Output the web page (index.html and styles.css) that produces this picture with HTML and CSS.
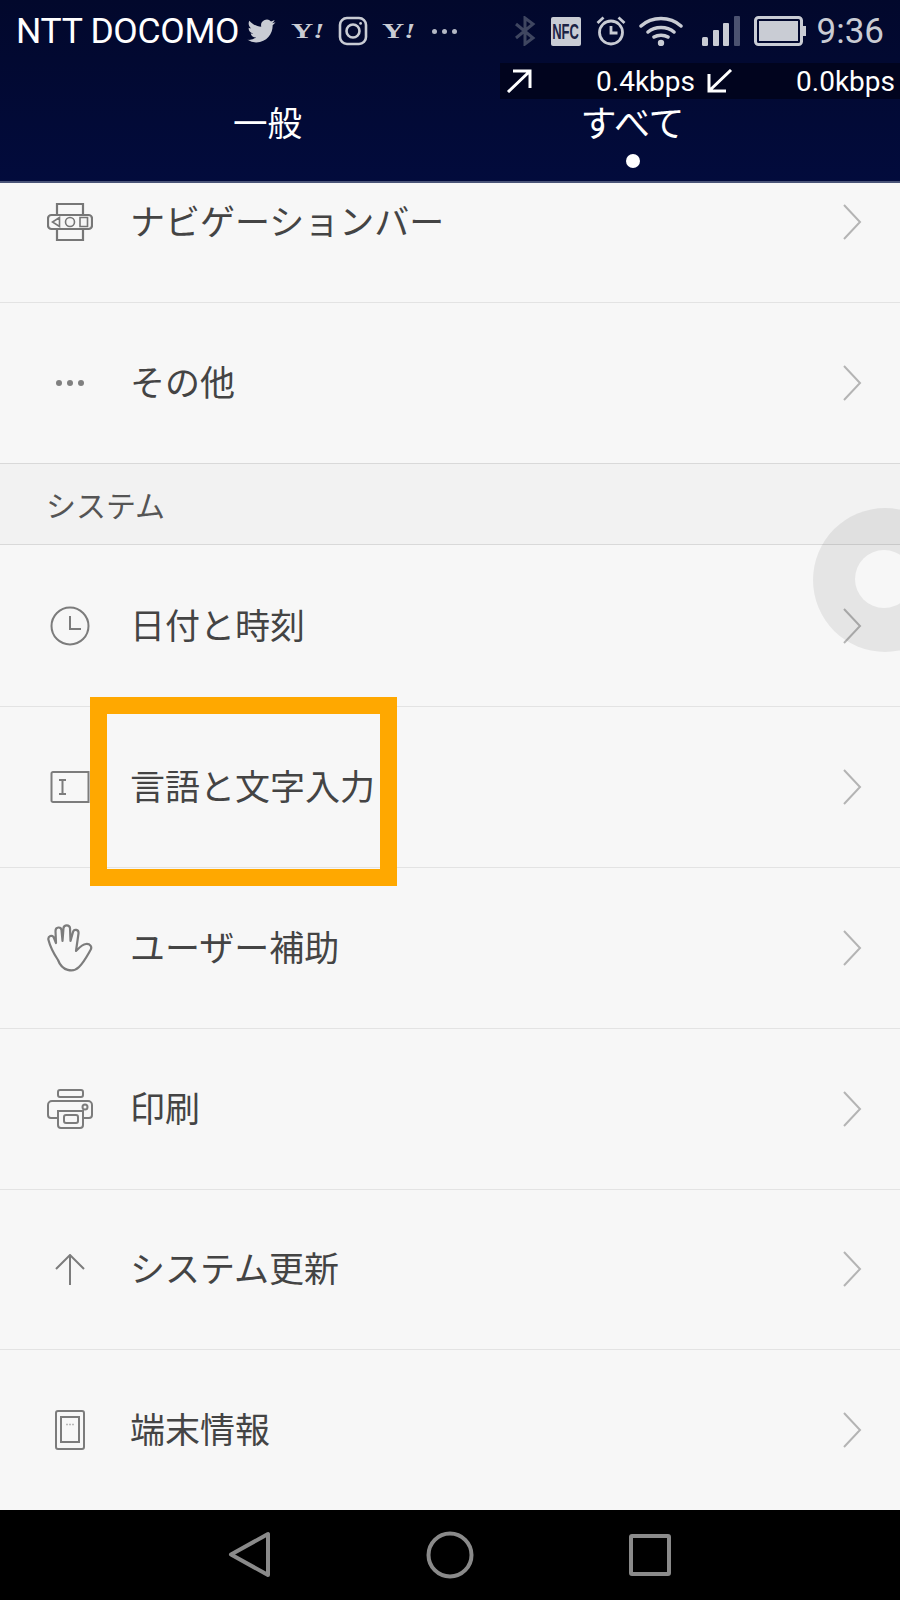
FILE: index.html
```html
<!DOCTYPE html>
<html>
<head>
  <title>設定</title>
  <link rel="stylesheet" href="styles.css">
</head>
<body>
  <div class="phone">
    <div class="header">
      <div class="status-bar">
        <div class="status-left">
          <span class="carrier">NTT DOCOMO</span>
          <svg class="ic-twitter" viewBox="0 0 24 24"><path fill="#c9ccd4" d="M23.953 4.57a10 10 0 01-2.825.775 4.958 4.958 0 002.163-2.723c-.951.555-2.005.959-3.127 1.184a4.92 4.92 0 00-8.384 4.482C7.69 8.095 4.067 6.13 1.64 3.162a4.822 4.822 0 00-.666 2.475c0 1.71.87 3.213 2.188 4.096a4.904 4.904 0 01-2.228-.616v.06a4.923 4.923 0 003.946 4.827 4.996 4.996 0 01-2.212.085 4.936 4.936 0 004.604 3.417 9.867 9.867 0 01-6.102 2.105c-.39 0-.779-.023-1.17-.067a13.995 13.995 0 007.557 2.209c9.053 0 13.998-7.496 13.998-13.985 0-.21 0-.42-.015-.63A9.935 9.935 0 0024 4.59z"/></svg>
          <span class="yahoo">Y<i>!</i></span>
          <svg class="ic-insta" viewBox="0 0 30 30" fill="none" stroke="#c9ccd4" stroke-width="2.6"><rect x="2" y="2" width="26" height="26" rx="7"/><circle cx="15" cy="15" r="6.5"/><circle cx="22.6" cy="7.4" r="1.4" fill="#c9ccd4" stroke="none"/></svg>
          <span class="yahoo">Y<i>!</i></span>
          <span class="more-dots"><b></b><b></b><b></b></span>
        </div>
        <div class="status-right">
          <svg class="ic-bt" viewBox="0 0 22 30" fill="none" stroke="#3f4660" stroke-width="3"><path d="M2 8l17 14-8 6V2l8 6L2 22"/></svg>
          <span class="ic-nfc"><span class="nfc-text">NFC</span></span>
          <svg class="ic-alarm" viewBox="0 0 30 30" fill="none" stroke="#c9ccd4" stroke-width="2.8"><circle cx="15" cy="16.500" r="11.500"/><path d="M15 10v7h6.500M1.500 7l6-5.500M28.500 7l-6-5.500"/></svg>
          <svg class="ic-wifi" viewBox="0 0 44 30" fill="none" stroke="#c9ccd4" stroke-width="3.500" stroke-linecap="round"><path d="M2 10c11-10 29-10 40 0M9 16c7-6 19-6 26 0M15 21c4-2.500 10-2.500 14 0"/><circle cx="22" cy="27" r="3.200" fill="#c9ccd4" stroke="none"/></svg>
          <svg class="ic-signal" viewBox="0 0 38 30"><rect x="0" y="21" width="6" height="9" rx="1.500" fill="#c9ccd4"/><rect x="11" y="14" width="6" height="16" rx="1" fill="#c9ccd4"/><rect x="21" y="7" width="6" height="23" rx="1" fill="#c9ccd4"/><rect x="32" y="0" width="6" height="30" rx="1" fill="#4b5270"/></svg>
          <svg class="ic-battery" viewBox="0 0 52 30"><rect x="1.500" y="1.500" width="46" height="27" rx="3" fill="none" stroke="#c9ccd4" stroke-width="3"/><rect x="5" y="5" width="39" height="20" fill="#c9ccd4"/><rect x="49" y="10" width="3" height="10" fill="#c9ccd4"/></svg>
          <span class="clock">9:36</span>
        </div>
      </div>

      <div class="net-speed">
        <svg class="ic-net" viewBox="0 0 26 24" fill="none" stroke="#fff" stroke-width="3"><path d="M2 23L24 2M7 2h17v17"/></svg>
        <span class="net-val up">0.4kbps</span>
        <svg class="ic-net" viewBox="0 0 26 24" fill="none" stroke="#fff" stroke-width="3"><path d="M24 1L2 22M19 22H2V5"/></svg>
        <span class="net-val down">0.0kbps</span>
      </div>

      <div class="tabs">
        <div class="tab">一般</div>
        <div class="tab active">すべて<span class="tab-dot"></span></div>
      </div>
    </div>

    <div class="list">
      <div class="row row-cut">
        <div class="row-icon">
          <svg width="46" height="40" viewBox="0 0 46 40" fill="none" stroke="#777" stroke-width="2.200"><path d="M10 13V2h26v11M10 27v11h26V27"/><rect x="1" y="13" width="44" height="14" rx="3.500"/><path d="M12.500 15.500l-7 4.500 7 4.500zM33 15.500h7.500v9H33z" stroke-width="1.600"/><circle cx="23" cy="20" r="4.500" stroke-width="1.600"/></svg>
        </div>
        <span class="row-text">ナビゲーションバー</span>
        <svg class="chevron" viewBox="0 0 20 36"><path d="M2 1l16 17L2 35"/></svg>
      </div>
      <div class="row">
        <div class="row-icon">
          <svg width="46" height="10" viewBox="0 0 46 10" fill="#808080"><circle cx="12" cy="5" r="3"/><circle cx="23" cy="5" r="3"/><circle cx="34" cy="5" r="3"/></svg>
        </div>
        <span class="row-text">その他</span>
        <svg class="chevron" viewBox="0 0 20 36"><path d="M2 1l16 17L2 35"/></svg>
      </div>

      <div class="section">システム</div>

      <div class="row">
        <div class="row-icon">
          <svg width="40" height="40" viewBox="0 0 40 40" fill="none" stroke="#7c7c7c" stroke-width="2"><circle cx="20" cy="20" r="18.500"/><path d="M20 10v13h11"/></svg>
        </div>
        <span class="row-text">日付と時刻</span>
        <svg class="chevron" viewBox="0 0 20 36"><path d="M2 1l16 17L2 35"/></svg>
      </div>
      <div class="row">
        <div class="row-icon">
          <svg width="40" height="32" viewBox="0 0 40 32" fill="none" stroke="#7c7c7c" stroke-width="2"><path d="M38 1H3a1.500 1.500 0 00-1.500 1.500v27A1.500 1.500 0 003 31h35.500V1z"/><path d="M9 9h7M9 23h7M12.500 9v14"/></svg>
        </div>
        <span class="row-text">言語と文字入力</span>
        <svg class="chevron" viewBox="0 0 20 36"><path d="M2 1l16 17L2 35"/></svg>
      </div>
      <div class="row">
        <div class="row-icon">
          <svg width="46" height="48" viewBox="0 0 46 48" fill="none" stroke="#7c7c7c" stroke-width="2.200" stroke-linejoin="round" stroke-linecap="round"><path d="M11 36C7 30 3 22 1.500 16 .5 12 5.500 10 7 14l2 5-.5-12c0-4.500 5.500-4.500 6-1l1 11 1-13c.5-3.500 6-3.500 6.500 0l.5 13 2.500-9c1-3.500 6-2.500 5.500 1.500L29 27c3-3 6-6.500 10-7 4-.5 6.500 3 4.500 6-3.500 6-6.500 12-11.500 17-6 6-17 4-21-7z"/></svg>
        </div>
        <span class="row-text">ユーザー補助</span>
        <svg class="chevron" viewBox="0 0 20 36"><path d="M2 1l16 17L2 35"/></svg>
      </div>
      <div class="row">
        <div class="row-icon">
          <svg width="46" height="40" viewBox="0 0 46 40" fill="none" stroke="#7c7c7c" stroke-width="2"><rect x="11" y="1" width="25" height="7" rx="2"/><path d="M11 29H4a3 3 0 01-3-3V16a4 4 0 014-4h36a4 4 0 014 4v10a3 3 0 01-3 3h-7"/><path d="M11 22h25v14a3 3 0 01-3 3H14a3 3 0 01-3-3z"/><rect x="17" y="26" width="14" height="8" rx="2"/><circle cx="38" cy="18" r="2.500"/></svg>
        </div>
        <span class="row-text">印刷</span>
        <svg class="chevron" viewBox="0 0 20 36"><path d="M2 1l16 17L2 35"/></svg>
      </div>
      <div class="row">
        <div class="row-icon">
          <svg width="30" height="31" viewBox="0 0 30 31" fill="none" stroke="#7c7c7c" stroke-width="2"><path d="M1 15L15 1l14 14M15 1v30"/></svg>
        </div>
        <span class="row-text">システム更新</span>
        <svg class="chevron" viewBox="0 0 20 36"><path d="M2 1l16 17L2 35"/></svg>
      </div>
      <div class="row">
        <div class="row-icon">
          <svg width="30" height="40" viewBox="0 0 30 40" fill="none" stroke="#7c7c7c" stroke-width="2"><rect x="1" y="1" width="28" height="38" rx="2"/><rect x="6" y="7" width="18" height="25"/><path d="M11.500 14.500h1M14.500 14.500h1M17.500 14.500h1" stroke-width="1.500"/></svg>
        </div>
        <span class="row-text">端末情報</span>
        <svg class="chevron" viewBox="0 0 20 36"><path d="M2 1l16 17L2 35"/></svg>
      </div>
    </div>

    <div class="nav-bar">
      <svg width="48" height="48" viewBox="0 0 48 48" fill="none" stroke="#8a8a8a" stroke-width="4" stroke-linejoin="round"><path d="M42 3v41L5 23.500z"/></svg>
      <svg width="48" height="48" viewBox="0 0 48 48" fill="none" stroke="#8a8a8a" stroke-width="4"><circle cx="24" cy="24" r="21.500"/></svg>
      <svg width="48" height="48" viewBox="0 0 48 48" fill="none" stroke="#8a8a8a" stroke-width="4" stroke-linejoin="round"><rect x="5" y="5" width="38" height="38" rx="1"/></svg>
    </div>

    <!-- float ball and highlight box sit on top of the list -->
    <div class="float-ball"><div class="float-hole"></div></div>
    <div class="highlight"></div>
  </div>
</body>
</html>
```

FILE: styles.css
```css
body {
  margin: 0;
  font-family: "Noto Sans CJK JP", "Noto Sans", sans-serif;
  background-color: #000;
}

.phone {
  position: relative;
  width: 900px;
  height: 1600px;
  display: flex;
  flex-direction: column;
  overflow: hidden;
  background-color: #f7f7f7;
}

/* header */
.header {
  position: relative;
  height: 183px;
  flex: none;
  box-sizing: border-box;
  background: linear-gradient(#02082c, #020b3c);
  border-bottom: 2px solid #4a5478;
  color: #fff;
}

.status-bar {
  height: 60px;
  padding: 2px 16px 0;
  box-sizing: border-box;
  display: flex;
  align-items: center;
  justify-content: space-between;
  color: #fff;
}

.status-left,
.status-right {
  display: flex;
  align-items: center;
}

.carrier {
  font-family: Roboto, sans-serif;
  font-size: 35.500px;
  letter-spacing: -0.3px;
  white-space: nowrap;
}

.ic-twitter {
  width: 31px;
  height: 28px;
  margin-left: 7px;
}

.yahoo {
  width: 33px;
  margin-left: 14px;
  font-family: "Liberation Serif", serif;
  font-size: 22px;
  font-weight: bold;
  color: #c9ccd4;
  white-space: nowrap;
  transform: scaleX(1.4);
  transform-origin: left center;
}

.yahoo i {
  font-size: 20px;
}

.ic-insta {
  width: 30px;
  height: 30px;
  margin-left: 14px;
}

.more-dots {
  display: flex;
  gap: 5px;
  margin-left: 17px;
}

.more-dots b {
  width: 5px;
  height: 5px;
  border-radius: 50%;
  background-color: #b4b8c4;
}

.status-right svg {
  flex: none;
}

.ic-bt {
  width: 22px;
  height: 30px;
}

.ic-nfc {
  width: 30px;
  height: 29px;
  margin-left: 15px;
  display: flex;
  align-items: center;
  justify-content: center;
  border-radius: 2px;
  background-color: #c9ccd4;
}

.nfc-text {
  font-family: "Liberation Sans", sans-serif;
  font-size: 13px;
  font-weight: bold;
  color: #1c2244;
  transform: scaleY(1.7);
}

.ic-alarm {
  width: 30px;
  height: 30px;
  margin-left: 15px;
}

.ic-wifi {
  width: 44px;
  height: 30px;
  margin-left: 13px;
}

.ic-signal {
  width: 38px;
  height: 30px;
  margin-left: 19px;
}

.ic-battery {
  width: 52px;
  height: 30px;
  margin-left: 14px;
}

.clock {
  margin-left: 11px;
  font-family: Roboto, sans-serif;
  font-size: 35px;
  color: #c9ccd4;
}

.net-speed {
  position: absolute;
  top: 63px;
  right: 0;
  width: 400px;
  height: 36px;
  padding-left: 6px;
  box-sizing: border-box;
  display: flex;
  align-items: center;
  background-color: #01041e;
  font-family: Roboto, sans-serif;
  font-size: 28px;
}

.ic-net {
  width: 26px;
  height: 24px;
  flex: none;
}

.net-val {
  text-align: right;
}

.net-val.up {
  width: 163px;
  margin-right: 12px;
}

.net-val.down {
  width: 162px;
}

.tabs {
  display: flex;
  padding: 36px 85px 0;
}

.tab {
  flex: 1;
  display: flex;
  flex-direction: column;
  align-items: center;
  font-size: 34.500px;
  line-height: 50px;
}

.tab.active {
  font-size: 36px;
}

.tab-dot {
  width: 14px;
  height: 14px;
  margin-top: 8px;
  border-radius: 50%;
  background-color: #fff;
}

/* list */
.list {
  flex: 1;
  overflow: hidden;
}

.row {
  height: 160.750px;
  box-sizing: border-box;
  padding: 0 38px 0 46px;
  display: flex;
  align-items: center;
  border-bottom: 1px solid #e3e3e3;
}

.row-cut {
  margin-top: -41px;
}

.row-icon {
  width: 48px;
  flex: none;
  display: flex;
  justify-content: center;
  align-items: center;
}

.row-text {
  flex: 1;
  margin-left: 36px;
  padding-bottom: 5px;
  font-size: 35px;
  color: #444;
}

.chevron {
  width: 20px;
  height: 36px;
  flex: none;
  fill: none;
  stroke: #b4b4b4;
  stroke-width: 2;
}

.section {
  height: 82px;
  box-sizing: border-box;
  padding: 0 46px;
  display: flex;
  align-items: center;
  border-bottom: 1px solid #d9d9d9;
  border-top: 1px solid #d9d9d9;
  margin-top: -1px;
  margin-bottom: 2px;
  background-color: #f2f2f2;
  font-size: 30px;
  color: #555;
}

.nav-bar {
  height: 90px;
  flex: none;
  display: flex;
  justify-content: center;
  align-items: center;
  gap: 152px;
  background-color: #000;
}

/* overlays */
.float-ball {
  position: absolute;
  top: 508px;
  left: 813px;
  width: 144px;
  height: 144px;
  border-radius: 50%;
  background-color: rgba(0, 0, 0, 0.07);
}

.float-hole {
  position: absolute;
  top: 42px;
  left: 42px;
  width: 58px;
  height: 58px;
  border-radius: 50%;
  background-color: #f7f7f7;
}

.highlight {
  position: absolute;
  top: 697px;
  left: 90px;
  width: 307px;
  height: 189px;
  box-sizing: border-box;
  border: 17px solid #ffa800;
}
```
